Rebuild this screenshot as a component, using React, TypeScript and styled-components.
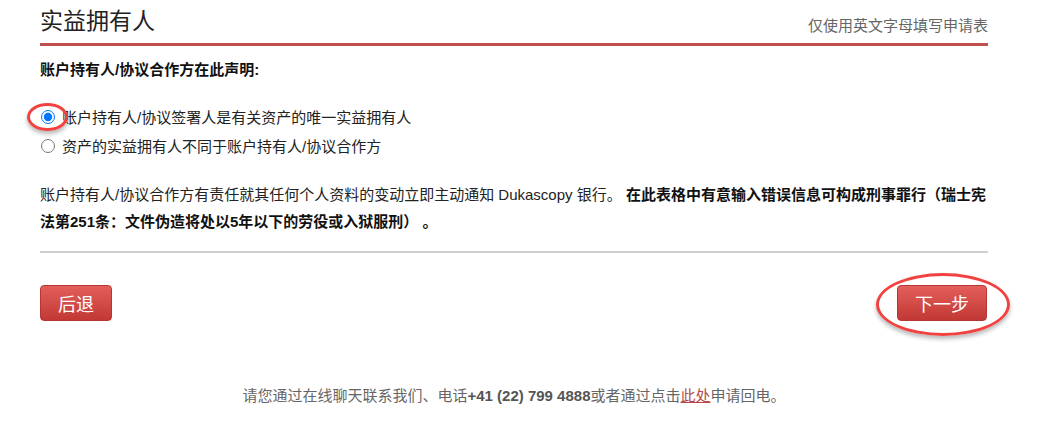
import styled, { createGlobalStyle } from "styled-components";

const GlobalStyle = createGlobalStyle`
  body {
    margin: 0;
    background: #fff;
    font-family: "Liberation Sans", "Noto Sans CJK SC", sans-serif;
    color: #222;
  }
`;

type RadioOption = {
  label: string;
  checked?: boolean;
  marked?: boolean;
};

const options: RadioOption[] = [
  { label: "账户持有人/协议签署人是有关资产的唯一实益拥有人", checked: true, marked: true },
  { label: "资产的实益拥有人不同于账户持有人/协议合作方" },
];

export default function App() {
  return (
    <>
      <GlobalStyle />
      <S.Page>
        <S.Header>
          <S.Title>实益拥有人</S.Title>
          <S.Note>仅使用英文字母填写申请表</S.Note>
        </S.Header>

        <S.Heading>账户持有人/协议合作方在此声明:</S.Heading>

        <S.RadioGroup>
          {options.map((o) => (
            <S.RadioRow key={o.label}>
              <S.RadioWrap>
                <S.Radio type="radio" name="owner" defaultChecked={o.checked} />
                {o.marked && <S.SmallMark />}
              </S.RadioWrap>
              {o.label}
            </S.RadioRow>
          ))}
        </S.RadioGroup>

        <S.Paragraph>
          账户持有人/协议合作方有责任就其任何个人资料的变动立即主动通知 Dukascopy 银行。{" "}
          <b>在此表格中有意输入错误信息可构成刑事罪行（瑞士宪法第251条：文件伪造将处以5年以下的劳役或入狱服刑） 。</b>
        </S.Paragraph>

        <S.Divider />

        <S.Actions>
          <S.Button>后退</S.Button>
          <S.NextWrap>
            <S.Button>下一步</S.Button>
            <S.BigMark />
          </S.NextWrap>
        </S.Actions>

        <S.Footer>
          请您通过在线聊天联系我们、电话<b>+41 (22) 799 4888</b>或者通过点击<a href="#">此处</a>申请回电。
        </S.Footer>
      </S.Page>
    </>
  );
}

const Mark = styled.span`
  position: absolute;
  box-sizing: border-box;
  border: 3px solid #f24141;
  border-radius: 50%;
  box-shadow: 0 3px 4px rgba(0, 0, 0, 0.28);
  pointer-events: none;
`;

const S = {
  Page: styled.div`
    padding: 0 60px 0 40px;
  `,
  //
  Header: styled.div`
    display: flex;
    justify-content: space-between;
    align-items: flex-end;
    padding: 6px 0 7px;
    border-bottom: 3px solid #c0504d;
  `,
  Title: styled.h1`
    margin: 0;
    font-size: 23px;
    line-height: 30px;
    font-weight: 400;
    color: #222;
  `,
  Note: styled.span`
    font-size: 15px;
    line-height: 20px;
    color: #666;
  `,
  //
  Heading: styled.div`
    margin-top: 14px;
    font-size: 15px;
    line-height: 20px;
    font-weight: 700;
    color: #111;
  `,
  //
  RadioGroup: styled.div`
    margin-top: 22px;
    display: flex;
    flex-direction: column;
  `,
  RadioRow: styled.label`
    display: flex;
    align-items: center;
    height: 29px;
    font-size: 15px;
    color: #222;
  `,
  RadioWrap: styled.span`
    position: relative;
    display: flex;
    margin: 0 7px 0 1px;
  `,
  Radio: styled.input`
    width: 14px;
    height: 14px;
    margin: 0;
  `,
  SmallMark: styled(Mark)`
    left: -14px;
    top: -7px;
    width: 41px;
    height: 28px;
  `,
  //
  Paragraph: styled.p`
    margin: 21px 0 0;
    font-size: 15px;
    line-height: 27px;
    color: #222;

    b {
      color: #111;
    }
  `,
  Divider: styled.hr`
    margin: 16px 0 0;
    border: 0;
    height: 2px;
    background: #cfcfcf;
  `,
  //
  Actions: styled.div`
    display: flex;
    justify-content: space-between;
    align-items: center;
    margin-top: 32px;
  `,
  NextWrap: styled.div`
    position: relative;
    display: flex;
    margin-right: 1px;
  `,
  BigMark: styled(Mark)`
    left: -21px;
    top: -12px;
    width: 134px;
    height: 63px;
  `,
  Button: styled.button`
    height: 36px;
    padding: 0 17px;
    border: 1px solid #b53632;
    border-radius: 4px;
    background: linear-gradient(#e35f5b, #c13834);
    color: #fff;
    font-family: "Noto Sans CJK SC", sans-serif;
    font-size: 18px;
    line-height: 34px;
    cursor: pointer;
  `,
  //
  Footer: styled.div`
    margin-top: 65px;
    text-align: center;
    font-size: 15px;
    line-height: 20px;
    color: #666;

    b {
      color: #555;
    }

    a {
      color: #b94a48;
    }
  `,
};
